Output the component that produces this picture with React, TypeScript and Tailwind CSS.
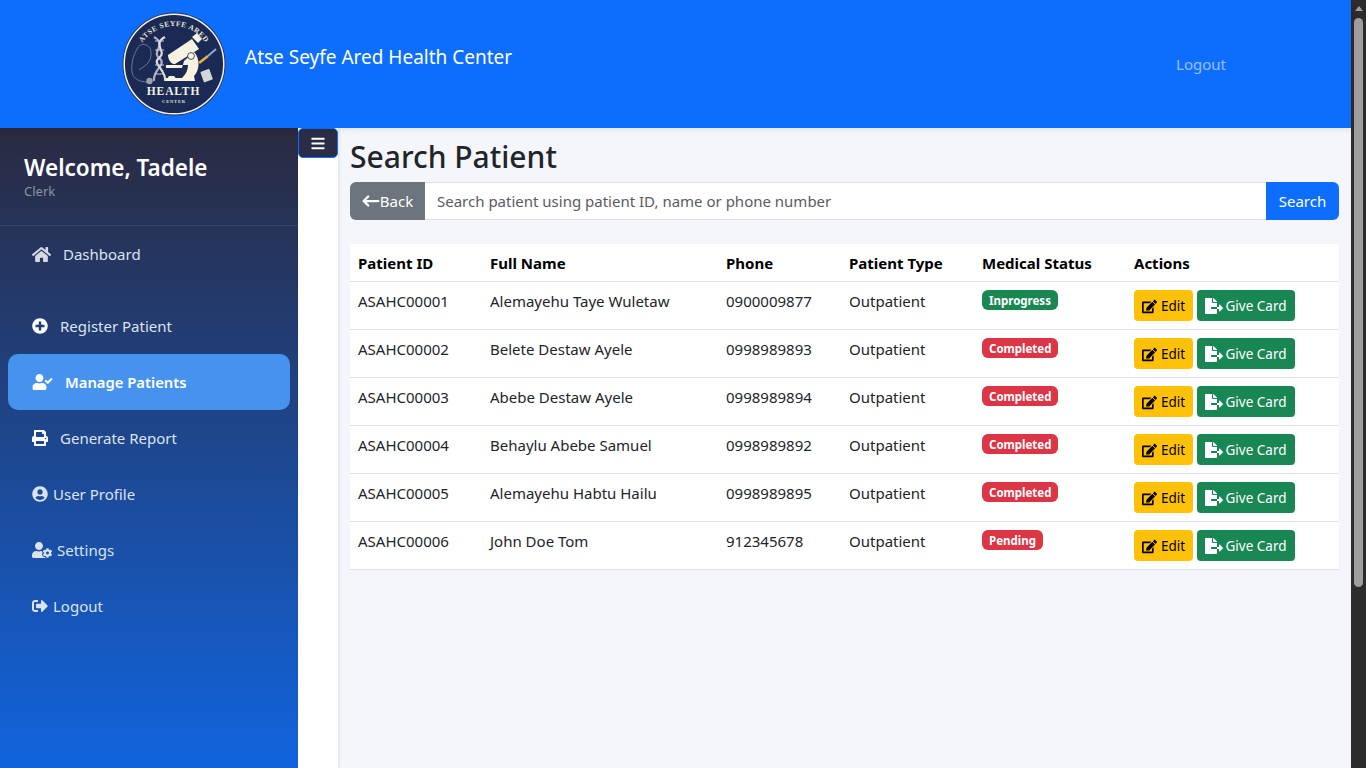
import { FaHome, FaPlusCircle, FaUserCheck, FaPrint, FaUserCircle, FaUserCog, FaSignOutAlt, FaEdit, FaFileExport, FaBars } from 'react-icons/fa'
import { BsArrowLeft } from 'react-icons/bs'

const patients = [
  { id: 'ASAHC00001', name: 'Alemayehu Taye Wuletaw', phone: '0900009877', status: 'Inprogress', badge: 'bg-[#198754]' },
  { id: 'ASAHC00002', name: 'Belete Destaw Ayele', phone: '0998989893', status: 'Completed', badge: 'bg-[#dc3545]' },
  { id: 'ASAHC00003', name: 'Abebe Destaw Ayele', phone: '0998989894', status: 'Completed', badge: 'bg-[#dc3545]' },
  { id: 'ASAHC00004', name: 'Behaylu Abebe Samuel', phone: '0998989892', status: 'Completed', badge: 'bg-[#dc3545]' },
  { id: 'ASAHC00005', name: 'Alemayehu Habtu Hailu', phone: '0998989895', status: 'Completed', badge: 'bg-[#dc3545]' },
  { id: 'ASAHC00006', name: 'John Doe Tom', phone: '912345678', status: 'Pending', badge: 'bg-[#dc3545]' },
]

const Logo = () => (
  <svg viewBox="0 0 104 104" className="h-[104px] w-[104px]">
    <defs>
      <path id="logo-arc" d="M 14 52 A 38 38 0 0 1 90 52" />
    </defs>
    <circle cx="52" cy="52" r="51.5" fill="#26345c" />
    <circle cx="52" cy="52" r="49.8" fill="#1b2a55" stroke="#f4f1e4" strokeWidth="1.5" />
    <text fontFamily="'Liberation Serif', serif" fontSize="7.4" fontWeight="700" fill="#e9e5d6" letterSpacing="0.5">
      <textPath href="#logo-arc" startOffset="50%" textAnchor="middle">ATSE SEYFE ARED</textPath>
    </text>
    {/* stethoscope */}
    <path d="M 28 36 C 24 31 18 31 15 37 C 11 44 9 52 10 60 C 11 67 18 70 25 70" fill="none" stroke="#6b7793" strokeWidth="1" />
    <path d="M 28 36 C 30 42 29 47 26 51 C 23 54 20 56 17 58" fill="none" stroke="#6b7793" strokeWidth="1" />
    <circle cx="27.5" cy="69" r="3.2" fill="#9a9fab" />
    {/* dna */}
    <path d="M 32 25 C 46 33 29 39 37 46 C 46 52 30 58 32 69" fill="none" stroke="#aeb2bc" strokeWidth="2.2" />
    <path d="M 43 25 C 29 33 46 39 37 46 C 29 52 45 58 43 69" fill="none" stroke="#dcdcdc" strokeWidth="2.2" />
    <path d="M 33 29 H 42 M 33 38 H 42 M 33 53 H 42 M 33 62 H 42" stroke="#c9cbd0" strokeWidth="1.2" />
    {/* microscope */}
    <path d="M 46 43 L 70 27 L 77 37 L 53 52 C 50 53 46 48 46 43 Z" fill="#f7f3e0" />
    <path d="M 70 25 L 75 21 L 80 27 L 76 31 Z" fill="#f7f3e0" />
    <path d="M 72 40 C 78 46 78 58 72 64 L 73 69 L 44 69 L 44 66 L 60 66 C 64 62 66 58 66 53 L 44 53 L 44 56 L 60 56 L 62 49 Z" fill="#f7f3e0" />
    <path d="M 44 69 L 56 69 L 52 64 L 47 64 Z" fill="#f7f3e0" />
    <circle cx="69" cy="44" r="3.4" fill="#f7f3e0" stroke="#1b2a55" strokeWidth="0.8" />
    {/* syringe */}
    <path d="M 77 51 L 86 44" stroke="#e3b23c" strokeWidth="2.6" />
    <path d="M 86 44 L 94 37" stroke="#7fb0d3" strokeWidth="2" />
    {/* pills */}
    <rect x="80" y="58" width="9.5" height="11" rx="0.8" fill="#d4d6d8" transform="rotate(-20 85 64)" />
    <text x="51.5" y="83" textAnchor="middle" fontFamily="'Liberation Serif', serif" fontSize="11.5" fontWeight="700" fill="#f4f1e4" letterSpacing="0.9">HEALTH</text>
    <text x="52" y="91" textAnchor="middle" fontFamily="'Liberation Serif', serif" fontSize="4.6" fontWeight="700" fill="#e9e5d6" letterSpacing="0.8">CENTER</text>
  </svg>
)

const SideLink = ({ icon, label, active, className }: { icon: React.ReactNode; label: string; active?: boolean; className?: string }) => (
  <div className={`mx-2 flex h-14 items-center rounded-[10px] pl-6 ${active ? 'bg-[#4693ef] text-[14.8px] font-semibold text-white' : 'text-[15px] text-[#dbe3f0]'} ${className ?? ''}`}>
    {icon}
    <span>{label}</span>
  </div>
)

export default function App() {
  return (
    <div className="flex h-[768px] overflow-hidden bg-[#f4f6fb] font-['Noto_Sans',sans-serif] text-[15px] text-[#212529]">
      <div className="flex min-w-0 flex-1 flex-col">
        <header className="relative z-10 flex h-32 shrink-0 bg-[#0d6efd] shadow-[0_2px_6px_rgba(0,0,0,0.08)]">
          <div className="ml-[122px] mt-3 shrink-0"><Logo /></div>
          <div className="ml-[19px] mt-[42px] text-[19px] leading-[30px] text-white">Atse Seyfe Ared Health Center</div>
          <div className="ml-auto mr-[125px] mt-[52px] text-[15px] leading-6 text-white/55">Logout</div>
        </header>

        <div className="flex min-h-0 flex-1">
          <aside className="w-[298px] shrink-0 bg-[linear-gradient(180deg,#2a2a40_0%,#1164de_100%)]">
            <div className="h-[98px] border-b border-white/10 pl-6 pt-6">
              <div className="text-[22.5px] font-semibold leading-8 text-white">Welcome, Tadele</div>
              <div className="text-[13px] leading-[15px] text-[#8d93a3]">Clerk</div>
            </div>
            <SideLink className="mb-4" icon={<FaHome className="mr-3 h-[19px] w-[19px] text-[#d5d9e4]" />} label="Dashboard" />
            <SideLink icon={<FaPlusCircle className="mr-3 h-4 w-4 text-white" />} label="Register Patient" />
            <SideLink active icon={<FaUserCheck className="mr-3 h-4 w-[21px] text-white" />} label="Manage Patients" />
            <SideLink icon={<FaPrint className="mr-3 h-4 w-4 text-white" />} label="Generate Report" />
            <SideLink icon={<FaUserCircle className="mr-[5px] h-4 w-4 text-[#dbe3f0]" />} label="User Profile" />
            <SideLink icon={<FaUserCog className="mr-[5px] h-4 w-5 text-[#dbe3f0]" />} label="Settings" />
            <SideLink icon={<FaSignOutAlt className="mr-[5px] h-4 w-4 text-[#dbe3f0]" />} label="Logout" />
          </aside>

          <div className="w-10 shrink-0 bg-white shadow-[1px_0_3px_rgba(0,0,0,0.1)]">
            <button className="flex h-[30px] w-10 items-center justify-center rounded-[5px] border border-[#0d6efd] bg-[#2a2d45] text-white">
              <FaBars className="h-[15px] w-[14px]" />
            </button>
          </div>

          <main className="min-w-0 flex-1 pl-3 pr-3">
            <h1 className="mt-[9px] text-[30px] font-medium leading-10">Search Patient</h1>
            <div className="mt-[5px] flex h-[38px]">
              <button className="flex w-[75px] items-center justify-center rounded-l-md bg-[#6c757d] text-white">
                <BsArrowLeft className="h-[18px] w-[18px] stroke-1" />
                <span>Back</span>
              </button>
              <div className="flex flex-1 items-center border-y border-[#dee2e6] bg-white pl-3 text-[#595c5f]">Search patient using patient ID, name or phone number</div>
              <button className="w-[73px] rounded-r-md bg-[#0d6efd] text-white">Search</button>
            </div>

            <table className="mt-6 w-full table-fixed border-collapse bg-white text-left">
              <colgroup>
                <col className="w-[132px]" />
                <col className="w-[236px]" />
                <col className="w-[123px]" />
                <col className="w-[133px]" />
                <col className="w-[152px]" />
                <col />
              </colgroup>
              <thead>
                <tr className="h-[37px] border-b border-[#dee2e6] font-bold text-black">
                  <th className="px-2 pb-0 pt-[2px] font-bold">Patient ID</th>
                  <th className="px-2 pb-0 pt-[2px] font-bold">Full Name</th>
                  <th className="px-2 pb-0 pt-[2px] font-bold">Phone</th>
                  <th className="px-2 pb-0 pt-[2px] font-bold">Patient Type</th>
                  <th className="px-2 pb-0 pt-[2px] font-bold">Medical Status</th>
                  <th className="px-2 pb-0 pt-[2px] font-bold">Actions</th>
                </tr>
              </thead>
              <tbody>
                {patients.map((p) => (
                  <tr key={p.id} className="h-12 border-b border-[#dee2e6] align-top">
                    <td className="px-2 pt-[7px] leading-6">{p.id}</td>
                    <td className="px-2 pt-[7px] leading-6">{p.name}</td>
                    <td className="px-2 pt-[7px] leading-6">{p.phone}</td>
                    <td className="px-2 pt-[7px] leading-6">Outpatient</td>
                    <td className="px-2 pt-2">
                      <span className={`block h-5 w-fit rounded-md px-[7px] text-[11.5px] font-bold leading-[21px] text-white ${p.badge}`}>{p.status}</span>
                    </td>
                    <td className="px-2 pt-2">
                      <div className="flex gap-1">
                        <button className="flex h-[31px] w-[59px] items-center justify-center gap-1 rounded bg-[#ffc107] pt-[2px] text-[13.5px] text-black">
                          <FaEdit className="h-[15px] w-[15px]" />Edit
                        </button>
                        <button className="flex h-[31px] w-[98px] items-center justify-center gap-[2px] rounded bg-[#198754] pt-[2px] text-[13.5px] text-white">
                          <FaFileExport className="h-4 w-[18px]" />Give Card
                        </button>
                      </div>
                    </td>
                  </tr>
                ))}
              </tbody>
            </table>
          </main>
        </div>
      </div>

      {/* scrollbar as the browser draws it */}
      <div className="flex w-[15px] shrink-0 flex-col items-center bg-[#2c2c2c]">
        <div className="mt-[6px] h-0 w-0 border-x-[4px] border-b-[5px] border-x-transparent border-b-[#9e9e9e]" />
        <div className="mt-[7px] h-[569px] w-[9px] rounded-full bg-[#9e9e9e]" />
      </div>
    </div>
  )
}
